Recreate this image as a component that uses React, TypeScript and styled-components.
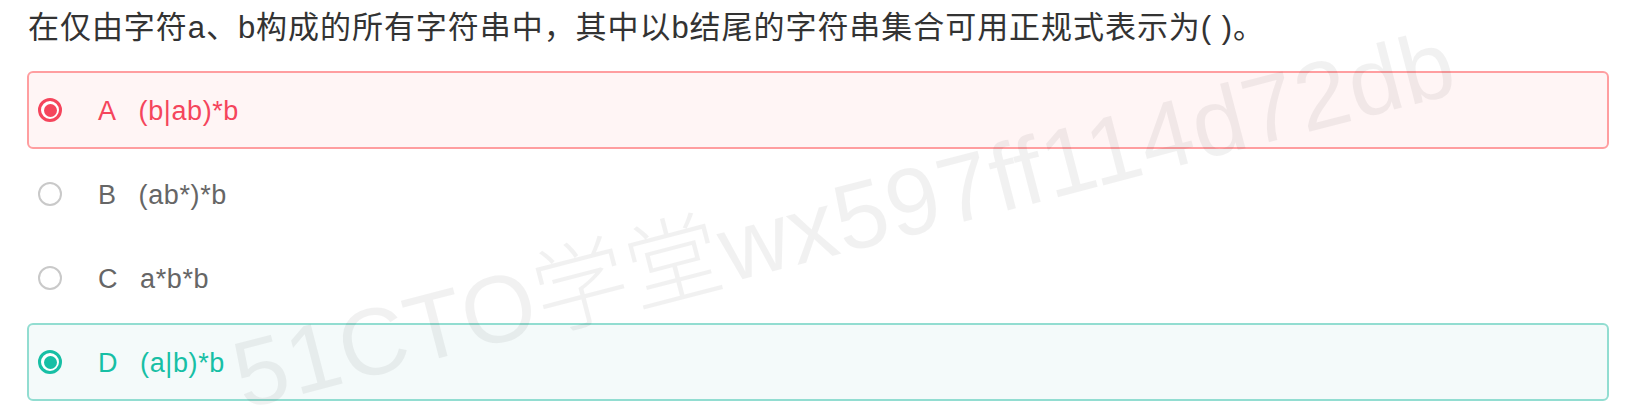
import React from "react";
import styled, { createGlobalStyle, css } from "styled-components";

const GlobalStyle = createGlobalStyle`
  html, body { margin: 0; padding: 0; background: #ffffff; }
  body { font-family: "Liberation Sans", "Noto Sans CJK SC", sans-serif; }
  * { box-sizing: border-box; }
`;

type Tone = "wrong" | "right" | "plain";

const palette: Record<Tone, { text: string; border: string; bg: string; radio: string }> = {
  wrong: { text: "#f5455c", border: "#ff9ea0", bg: "#fff5f5", radio: "#f5455c" },
  right: { text: "#17bfa5", border: "#92ddd1", bg: "#f4fafa", radio: "#17bfa5" },
  plain: { text: "#666666", border: "transparent", bg: "transparent", radio: "#c9c9c9" },
};

const Page = styled.div`
  position: relative;
  width: 1634px;
  height: 416px;
  overflow: hidden;
  padding: 0 25px 0 27px;
`;

const Question = styled.div`
  height: 56px;
  line-height: 56px;
  margin-left: 1px;
  margin-bottom: 15px;
  font-family: "Liberation Sans", "Noto Sans CJK SC", sans-serif;
  font-size: 31px;
  letter-spacing: 0.95px;
  color: #333333;
  white-space: nowrap;
`;

const Options = styled.div`
  display: flex;
  flex-direction: column;
  gap: 6px;
`;

const OptionRow = styled.div<{ $tone: Tone }>`
  display: flex;
  align-items: center;
  height: 78px;
  padding-left: 9px;
  border: 2px solid ${(p) => palette[p.$tone].border};
  border-radius: 6px;
  background: ${(p) => palette[p.$tone].bg};
  color: ${(p) => palette[p.$tone].text};
  font-size: 27px;
  letter-spacing: 0.6px;
`;

const Radio = styled.span<{ $tone: Tone }>`
  position: relative;
  flex: none;
  width: 24px;
  height: 24px;
  border-radius: 50%;
  background: #fff;
  ${(p) =>
    p.$tone === "plain"
      ? css`
          border: 2px solid ${palette.plain.radio};
        `
      : css`
          border: 3px solid ${palette[p.$tone].radio};
          &::after {
            content: "";
            position: absolute;
            left: 50%;
            top: 50%;
            width: 13px;
            height: 13px;
            margin: -6.5px 0 0 -6.5px;
            border-radius: 50%;
            background: ${palette[p.$tone].radio};
          }
        `}
`;

const Letter = styled.span`
  margin-left: 36px;
  margin-right: 22px;
  position: relative;
  top: 1px;
`;

const Answer = styled.span`
  position: relative;
  top: 1px;
`;

const Watermark = styled.div`
  position: absolute;
  left: 244px;
  top: 410px;
  transform-origin: 0 0;
  transform: rotate(-14.6deg) translateY(-0.85em);
  font-family: "Liberation Sans", "Noto Sans CJK SC", sans-serif;
  font-size: 95px;
  line-height: 1;
  font-weight: 300;
  color: rgba(0, 0, 0, 0.055);
  white-space: nowrap;
  pointer-events: none;
  letter-spacing: 1px;
`;

const options: { key: string; text: string; tone: Tone }[] = [
  { key: "A", text: "(b|ab)*b", tone: "wrong" },
  { key: "B", text: "(ab*)*b", tone: "plain" },
  { key: "C", text: "a*b*b", tone: "plain" },
  { key: "D", text: "(a|b)*b", tone: "right" },
];

export default function App() {
  return (
    <>
      <GlobalStyle />
      <Page>
        <Question>在仅由字符a、b构成的所有字符串中，其中以b结尾的字符串集合可用正规式表示为( )。</Question>
        <Options>
          {options.map((o) => (
            <OptionRow key={o.key} $tone={o.tone}>
              <Radio $tone={o.tone} />
              <Letter>{o.key}</Letter>
              <Answer>{o.text}</Answer>
            </OptionRow>
          ))}
        </Options>
        <Watermark>51CTO学堂wx597ff114d72db</Watermark>
      </Page>
    </>
  );
}
